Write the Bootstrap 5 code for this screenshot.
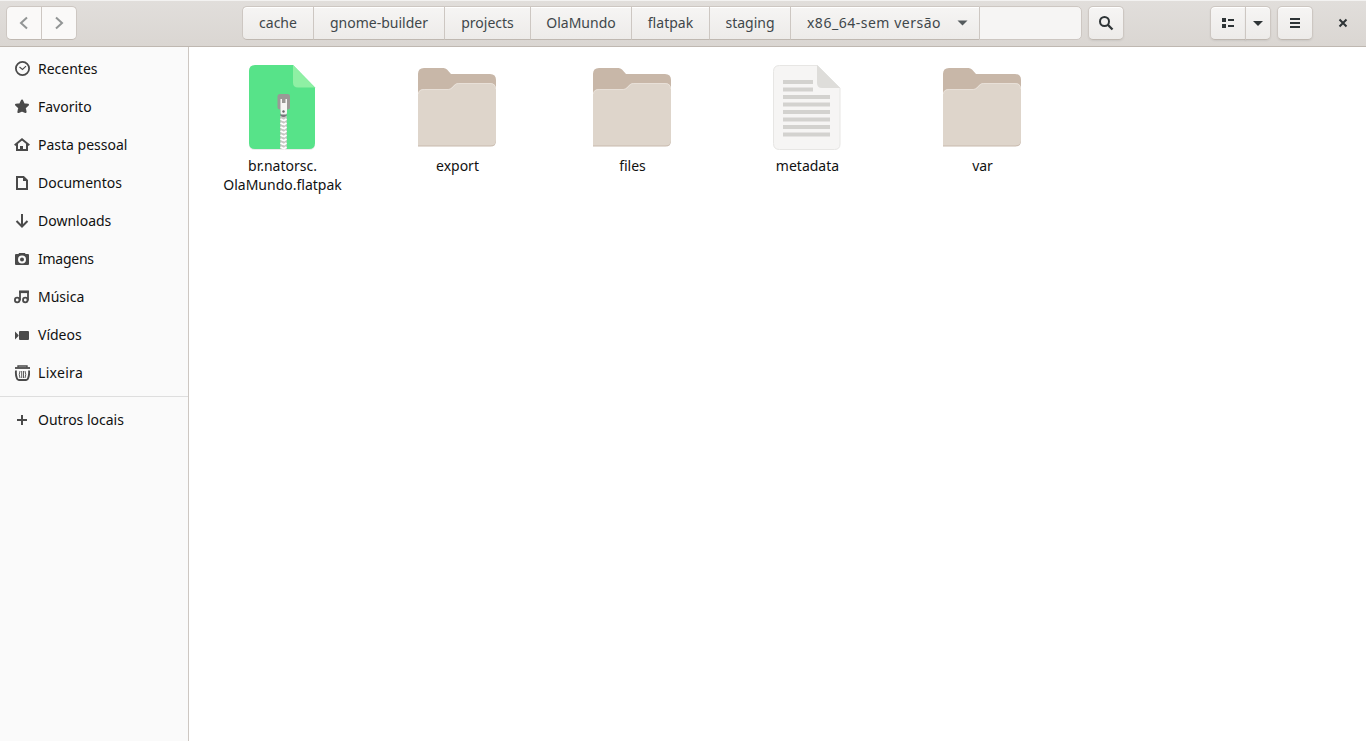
<!DOCTYPE html>
<html lang="pt-BR">
<head>
<meta charset="utf-8">
<title>x86_64-sem versão</title>
<link href="https://cdn.jsdelivr.net/npm/bootstrap@5.3.0/dist/css/bootstrap.min.css" rel="stylesheet">
<style>
body{font-family:"Noto Sans",sans-serif;font-size:14px;color:#111;background:#fff}
svg{display:block;flex:none}
.headbar{height:47px;padding:5px 6px 6px;background:linear-gradient(#e1dedb,#dad6d2);border-top:1px solid #f3f2f1;border-bottom:1px solid #bfb8b1}
.headbar .btn{height:34px;padding:0;border:1px solid #cdc7c2;border-bottom-color:#bfb8b1;border-radius:5px;background:linear-gradient(#f6f5f4,#edebe9);box-shadow:0 1px 2px rgba(0,0,0,.07),inset 0 1px #fff;color:#2e3436;display:flex;align-items:center;justify-content:center}
.headbar .btn.flat{background:#faf9f8;color:#929595;box-shadow:none}
.w36{width:36px}
.pathbar{width:840px;margin-left:165px}
.pathbar .btn{font-size:14px;line-height:20px;border-radius:0;border-right-width:0;box-shadow:inset 0 1px #fff;color:#40474a;white-space:nowrap;padding-bottom:1px}
.pathbar .btn:first-child{border-radius:5px 0 0 5px}
.pathbar .btn.current{padding-left:5px}
.current span{letter-spacing:.52px}
.pathrest{flex:1;height:34px;background:#f6f5f4;border:1px solid #cdc7c2;border-radius:0 5px 5px 0}
.sidebar{width:189px;height:694px;background:#fafafa;border-right:1px solid #cdc7c2;padding-top:3px}
.place{height:38px;padding-left:14px;gap:8px;color:#111}
.place svg{color:#4a4a4a}
.place span{padding-bottom:2px}
.rule{height:1px;background:#dedede;margin:4px 0}
.files{padding:12px 0 0 6px}
.file{width:175px;line-height:19px;text-align:center}
.file svg{margin:0 1px 1px 0}
</style>
</head>
<body class="overflow-hidden">
<header class="headbar d-flex">
  <div class="btn-group">
    <button class="btn flat w36" aria-label="Voltar"><svg width="16" height="16" viewBox="0 0 16 16" fill="none" stroke="currentColor" stroke-width="2"><path d="M11 2.500 5 8l6 5.500"/></svg></button>
    <button class="btn flat w36" aria-label="Avançar"><svg width="16" height="16" viewBox="0 0 16 16" fill="none" stroke="currentColor" stroke-width="2"><path d="m5 2.500 6 5.500-6 5.500"/></svg></button>
  </div>
  <nav class="pathbar d-flex">
    <button class="btn" style="width:71px"><span>cache</span></button>
    <button class="btn" style="width:131px"><span>gnome-builder</span></button>
    <button class="btn" style="width:86px"><span>projects</span></button>
    <button class="btn" style="width:101px"><span>OlaMundo</span></button>
    <button class="btn" style="width:78px"><span>flatpak</span></button>
    <button class="btn" style="width:81px"><span>staging</span></button>
    <button class="btn current" style="width:189px"><span>x86_64-sem versão</span><svg class="ms-3" width="11" height="6" viewBox="0 0 11 6"><path fill="#555b5d" d="M.5.500h10L5.500 5.500z"/></svg></button>
    <div class="pathrest"></div>
  </nav>
  <button class="btn w36" style="margin-left:6px" aria-label="Pesquisar"><svg width="16" height="16" viewBox="0 0 16 16" fill="none" stroke="currentColor" stroke-width="2"><circle cx="6.500" cy="6.500" r="4.500"/><path d="m9.800 9.800 4.700 4.700" stroke-width="2.300"/></svg></button>
  <div class="btn-group ms-auto">
    <button class="btn w36" aria-label="Lista"><svg width="16" height="16" viewBox="0 0 16 16" fill="currentColor"><path d="M2 3h4v4H2zm0 6h4v4H2zm6-5h6v2H8zm0 6h6v2H8z"/></svg></button>
    <button class="btn" style="width:26px" aria-label="Opções"><svg width="10" height="5" viewBox="0 0 10 5"><path fill="currentColor" d="M0 0h10L5 5z"/></svg></button>
  </div>
  <button class="btn w36" style="margin-left:6px" aria-label="Menu"><svg width="16" height="16" viewBox="0 0 16 16" fill="currentColor"><path d="M3 3h10v2H3zm0 4h10v2H3zm0 4h10v2H3z"/></svg></button>
  <div class="d-flex align-items-center" style="margin:0 9px 0 22px;color:#2e3436"><svg width="16" height="16" viewBox="0 0 16 16" fill="none" stroke="currentColor" stroke-width="2"><path d="m4.500 4.500 7 7m0-7-7 7"/></svg></div>
</header>
<main class="d-flex">
  <aside class="sidebar">
    <div class="place d-flex align-items-center"><svg width="16" height="16" viewBox="0 0 16 16" fill="none" stroke="currentColor"><circle cx="8.500" cy="7.500" r="6.600" stroke-width="1.800"/><path d="m5.500 6 3 2.500 3.500-3.300" stroke-width="1.100"/></svg><span>Recentes</span></div>
    <div class="place d-flex align-items-center"><svg width="16" height="16" viewBox="0 0 16 16"><path fill="currentColor" stroke="currentColor" stroke-width="2" stroke-linejoin="round" d="m8 1.500 1.800 3.800 4.200.500-3.200 3 .800 4.200L8 11.500l-3.600 1.500L5.200 8.800 2 5.800l4.200-.500z"/></svg><span>Favorito</span></div>
    <div class="place d-flex align-items-center"><svg width="16" height="16" viewBox="0 0 16 16" fill="none" stroke="currentColor" stroke-width="2"><path d="M.700 8.300 8 2.300l7.300 6M3 7v6h10V7"/><path fill="currentColor" stroke="none" d="M6 13V9h3v4z"/></svg><span>Pasta pessoal</span></div>
    <div class="place d-flex align-items-center"><svg width="16" height="16" viewBox="0 0 16 16" fill="none" stroke="currentColor" stroke-width="2"><path d="M3 2h6.500L13 5.500V14H3z"/><path fill="currentColor" stroke="none" d="M9 2v4h4z"/></svg><span>Documentos</span></div>
    <div class="place d-flex align-items-center"><svg width="16" height="16" viewBox="0 0 16 16" fill="none" stroke="currentColor" stroke-width="2"><path d="M8 1v13M2.500 8 8 13.500 13.500 8"/></svg><span>Downloads</span></div>
    <div class="place d-flex align-items-center"><svg width="16" height="16" viewBox="0 0 16 16"><path fill="currentColor" fill-rule="evenodd" d="M2 3h2.500L5 2h6l.500 1H14q1 0 1 1v9q0 1-1 1H2q-1 0-1-1V4q0-1 1-1zm6 1.500a4 4 0 1 0 0 8 4 4 0 0 0 0-8zm0 2a2 2 0 1 1 0 4 2 2 0 0 1 0-4z"/></svg><span style="letter-spacing:-.25px">Imagens</span></div>
    <div class="place d-flex align-items-center"><svg width="16" height="16" viewBox="0 0 16 16" fill="none" stroke="currentColor" stroke-width="1.800"><circle cx="3.200" cy="11" r="2.300"/><circle cx="11.300" cy="11" r="2.300"/><path d="M6 11.500V2.500h8v9"/><path d="M5.200 3h9.700" stroke-width="2.200"/></svg><span>Música</span></div>
    <div class="place d-flex align-items-center"><svg width="16" height="16" viewBox="0 0 16 16" fill="currentColor"><rect x="5" y="4" width="10" height="9" rx="1"/><path d="M1 4.500 4.500 8v1L1 12.500z"/></svg><span>Vídeos</span></div>
    <div class="place d-flex align-items-center"><svg width="16" height="16" viewBox="0 0 16 16" fill="none" stroke="currentColor"><path d="M1 3h15" stroke-width="1.800"/><path d="M4 2.500V1h9v1.500" stroke-width="1.400"/><path d="M2 5.500q-.500 4 .800 7.500.500 2 2 2h7.400q1.500 0 2-2 1.300-3.500.8-7.500" stroke-width="1.900"/><path d="M6 6q-1.500 3.500 0 7M11 6q1.500 3.500 0 7M7.700 6v7M9.500 6v7" stroke-width=".9"/></svg><span style="letter-spacing:.3px">Lixeira</span></div>
    <div class="rule"></div>
    <div class="place d-flex align-items-center"><svg width="16" height="16" viewBox="0 0 16 16" fill="none" stroke="currentColor" stroke-width="2"><path d="M3 8h10M8 3v10"/></svg><span>Outros locais</span></div>
  </aside>
  <section class="files d-flex align-items-start">
    <div class="file d-flex flex-column align-items-center">
      <svg width="96" height="96" viewBox="0 0 96 96">
        <path fill="#d8d8d8" d="M20 7h40l21 22v56q0 6-6 6H21q-6 0-6-6V13q0-6 5-6z" opacity=".5"/>
        <path fill="#57e389" d="M21 6h38l22 22.500V84q0 6-6 6H21q-6 0-6-6V12q0-6 6-6z"/>
        <path fill="#8ff0a4" d="M59 6l22 22.500H64q-5 0-5-5z"/>
        <g transform="translate(-.5)">
        <path d="M50 57v33" stroke="#c8c7c4" stroke-width="6.500"/>
        <path d="m47 60 3 1.500m-3 2.500 3 1.500m-3 2.500 3 1.500m-3 2.500 3 1.500m-3 2.500 3 1.500m-3 2.500 3 1.500m-3 2.500 3 1.500m-3 2.500 3 1.500M53 60l-3 2m3 2-3 2m3 2-3 2m3 2-3 2m3 2-3 2m3 2-3 2m3 2-3 2m3 2-3 2" stroke="#fff" stroke-width="1.900"/>
        <rect x="44" y="35" width="12.500" height="15.500" rx="2.500" fill="#9a9996"/>
        <path fill="#77767b" d="M47 51h6.500l-.500 5.500q-3 3-6 0z"/>
        <path fill="#f6f5f4" d="M47 40h1.500v4h3.500v-4h1.500v14q0 1.500-1.500 1.500h-3.500q-1.500 0-1.500-1.500z"/>
        <circle cx="50" cy="52.500" r="1.200" fill="#666"/>
        </g>
      </svg>
      <span>br.natorsc.</span><span>OlaMundo.flatpak</span>
    </div>
    <div class="file d-flex flex-column align-items-center"><svg width="96" height="96" viewBox="0 0 96 96"><use href="#folder"/></svg><span>export</span></div>
    <div class="file d-flex flex-column align-items-center"><svg width="96" height="96" viewBox="0 0 96 96"><use href="#folder"/></svg><span>files</span></div>
    <div class="file d-flex flex-column align-items-center">
      <svg width="96" height="96" viewBox="0 0 96 96">
        <path fill="#f6f5f4" stroke="#e7e6e4" d="M20.500 6.500h38L81 29v56q0 5.500-5.500 5.500h-55q-6 0-6-6v-72q0-6 6-6z"/>
        <path fill="#deddda" d="M58 6l23 23H63q-5 0-5-5z"/>
        <path fill="#d3d2cf" d="M24 21h30v4H24zm0 7.500h30v4H24zM24 36h47v4H24zm0 7.500h47v4H24zm0 7.500h47v4H24zm0 7.500h47v4H24zm0 7.500h47v4H24zm0 7.500h47v4H24z"/>
      </svg><span>metadata</span>
    </div>
    <div class="file d-flex flex-column align-items-center">
      <svg width="96" height="96" viewBox="0 0 96 96"><g id="folder">
        <path fill="#c8b7a8" d="M15 9h19.500q2 0 3.500 1.500L42 15h39q6 0 6 6v59H9V15q0-6 6-6z"/>
        <path fill="#c8b9ac" d="M9 80h78v2q0 5.500-5.500 5.500H9z"/>
        <path fill="#ded5cb" d="M9 86.500V35.500q0-5.500 6-5.500h24q2 0 3.500-1.500l3-3Q47 24 49 24h32q6 0 6 6v51q0 5.500-5.500 5.500z"/>
        <path fill="none" stroke="#e8e0d8" d="M9.500 35q0-4.500 6-4.500h24q2 0 3.500-1.500l3-3q1.500-1.500 3.500-1.500H81q5.500 0 5.500 5.500"/>
      </g></svg><span>var</span>
    </div>
  </section>
</main>
<script src="https://cdn.jsdelivr.net/npm/bootstrap@5.3.0/dist/js/bootstrap.bundle.min.js"></script>
</body>
</html>
